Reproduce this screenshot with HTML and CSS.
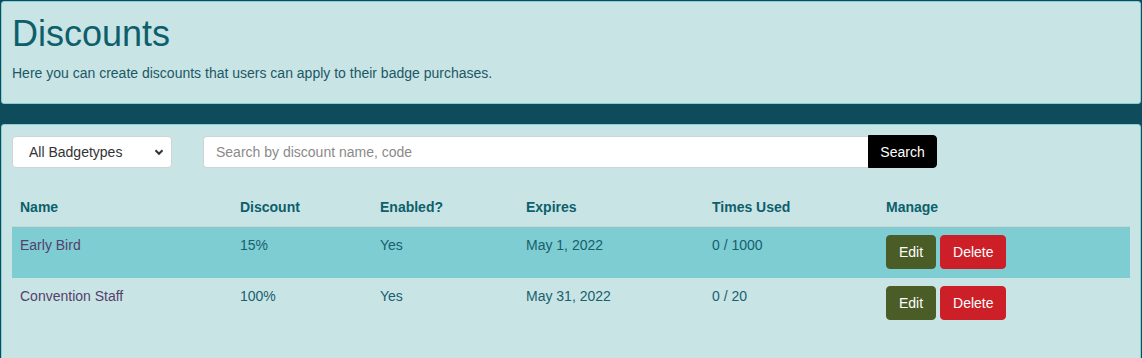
FILE: index.html
```html
<!DOCTYPE html>
<html>
<head>
<meta charset="utf-8">
<link rel="stylesheet" href="styles.css">
</head>
<body>
<div class="page">
  <section class="card header-card">
    <h1 class="title">Discounts</h1>
    <p class="subtitle">Here you can create discounts that users can apply to their badge purchases.</p>
  </section>
  <section class="card list-card">
    <div class="filters">
      <div class="select">
        <span>All Badgetypes</span>
        <svg class="chev" width="10" height="7" viewBox="0 0 10 7"><path d="M1.5 1.3 L5 4.8 L8.5 1.3" fill="none" stroke="#333" stroke-width="2"/></svg>
      </div>
      <div class="search">
        <input class="search-input" type="text" placeholder="Search by discount name, code">
        <button class="search-btn">Search</button>
      </div>
    </div>
    <table class="table">
      <thead>
        <tr>
          <th class="c-name">Name</th>
          <th class="c-disc">Discount</th>
          <th class="c-en">Enabled?</th>
          <th class="c-exp">Expires</th>
          <th class="c-used">Times Used</th>
          <th class="c-man">Manage</th>
        </tr>
      </thead>
      <tbody>
        <tr class="hl">
          <td class="name">Early Bird</td>
          <td>15%</td>
          <td>Yes</td>
          <td>May 1, 2022</td>
          <td>0 / 1000</td>
          <td><button class="btn edit">Edit</button> <button class="btn del">Delete</button></td>
        </tr>
        <tr>
          <td class="name">Convention Staff</td>
          <td>100%</td>
          <td>Yes</td>
          <td>May 31, 2022</td>
          <td>0 / 20</td>
          <td><button class="btn edit">Edit</button> <button class="btn del">Delete</button></td>
        </tr>
      </tbody>
    </table>
  </section>
</div>
</body>
</html>
```
FILE: styles.css
```css
html, body {
  margin: 0;
  padding: 0;
  background: #0e4c5c;
  font-family: "Liberation Sans", Arial, sans-serif;
  font-size: 14px;
  line-height: 20px;
}
.page {
  padding: 1px 1px 0 1px;
  height: 357px;
  overflow: hidden;
}
.card {
  background: #c9e4e5;
  border: 1px solid #86cfd5;
  border-radius: 3px;
}
.header-card {
  padding: 10px 11px 19px 10px;
  height: 72px;
}
.title {
  margin: 0;
  font-size: 36px;
  line-height: 43px;
  font-weight: normal;
  color: #0d5f6b;
}
.subtitle {
  margin: 8px 0 0 0;
  color: #1c5866;
}
.list-card {
  margin-top: 20px;
  padding: 11px 9px 40px 10px;
}
.filters {
  display: flex;
  align-items: center;
  gap: 31px;
}
.select {
  box-sizing: border-box;
  width: 160px;
  height: 32px;
  background: #fff;
  border: 1px solid #cfd4d6;
  border-radius: 4px;
  display: flex;
  align-items: center;
  justify-content: space-between;
  padding: 0 7px 0 16px;
  color: #333;
}
.chev { display: block; }
.search {
  display: flex;
}
.search-input {
  box-sizing: border-box;
  width: 665px;
  height: 32px;
  border: 1px solid #cfd4d6;
  border-right: none;
  border-radius: 4px 0 0 4px;
  padding: 0 12px;
  font-family: inherit;
  font-size: 14px;
  background: #fff;
  outline: none;
}
.search-input::placeholder { color: #8a8a8a; }
.search-btn {
  box-sizing: border-box;
  width: 69px;
  height: 33px;
  margin-top: -1px;
  background: #000;
  color: #fff;
  border: 1px solid #000;
  border-radius: 0 4px 4px 0;
  font-family: inherit;
  font-size: 14px;
  padding: 0;
}
.table {
  width: 1118px;
  margin-top: 21px;
  border-collapse: collapse;
}
.table th {
  text-align: left;
  font-weight: bold;
  color: #0d5f6b;
  padding: 8px 8px 9px 8px;
  border-bottom: 1px solid #d2d2d2;
}
.c-name { width: 204px; }
.c-disc { width: 124px; }
.c-en { width: 130px; }
.c-exp { width: 170px; }
.c-used { width: 158px; }
.table td {
  vertical-align: top;
  padding: 8px 8px 9px 8px;
  color: #17606d;
}
.table td.name { color: #553f6b; }
.table tr.hl td { background: #7ecdd3; }
.btn {
  box-sizing: border-box;
  height: 34px;
  padding: 6px 12px;
  border: 1px solid transparent;
  border-radius: 4px;
  color: #fff;
  font-family: inherit;
  font-size: 14px;
  line-height: 20px;
  vertical-align: top;
}
.edit { background: #4a5d27; border-color: #4a5d27; }
.del { background: #cc1f27; border-color: #cc1f27; }
```
